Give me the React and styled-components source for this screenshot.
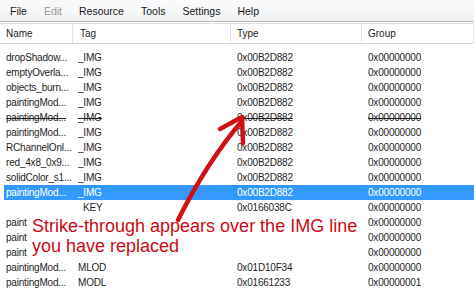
import React from "react";
import styled, { createGlobalStyle } from "styled-components";

const Global = createGlobalStyle`
  html, body { margin: 0; padding: 0; background: #ffffff; }
  body { font-family: "Liberation Sans", Arial, sans-serif; }
`;

const Window = styled.div`
  position: relative;
  width: 474px;
  height: 293px;
  overflow: hidden;
  background: #ffffff;
  font-family: "Liberation Sans", Arial, sans-serif;
  font-size: 10px;
  color: #1a1a1a;
`;

const MenuBar = styled.div`
  display: flex;
  align-items: center;
  gap: 17px;
  height: 22px;
  padding-left: 10px;
  background: linear-gradient(#fafbfc, #f1f2f4);
  border-bottom: 1px solid #b9bcc2;
  box-sizing: border-box;
  font-size: 10.5px;
`;

const MenuItem = styled.span`
  color: ${(p) => (p.$disabled ? "#9a9a9a" : "#1a1a1a")};
`;

const Header = styled.div`
  display: grid;
  grid-template-columns: 73px 158px 131px 1fr;
  height: 21px;
  margin-top: 1px;
  border-top: 1px solid #e3e3e3;
  border-bottom: 1px solid #d5d5d5;
  box-sizing: border-box;
  background: #ffffff;
`;

const HeadCell = styled.div`
  display: flex;
  align-items: center;
  padding-left: ${(p) => p.$pad}px;
  border-right: 1px solid #e5e5e5;
  color: #1e1e1e;
`;

const List = styled.div`
  padding-top: 6px;
  padding-left: 4px;
`;

const Row = styled.div`
  display: grid;
  grid-template-columns: 69px 158px 131px 1fr;
  height: 15px;
  align-items: center;
  white-space: nowrap;
  letter-spacing: -0.2px;
  background: ${(p) => (p.$selected ? "#3399ff" : "transparent")};
  color: ${(p) => (p.$selected ? "#ffffff" : "#1e1e1e")};
  text-decoration: ${(p) => (p.$struck ? "line-through" : "none")};
`;

const Cell = styled.div`
  padding-left: ${(p) => p.$pad}px;
  overflow: hidden;
  min-width: 0;
`;

const Note = styled.div`
  position: absolute;
  left: 30px;
  top: 214px;
  width: 330px;
  height: 46px;
  background: #ffffff;
  box-sizing: border-box;
  padding: 2px 0 0 2px;
  font-family: "Liberation Sans", Arial, sans-serif;
  font-size: 18px;
  line-height: 20px;
  color: #cc0a14;
  white-space: nowrap;
`;

const ArrowLayer = styled.svg`
  position: absolute;
  left: 0;
  top: 0;
  pointer-events: none;
`;

const rows = [
  { name: "dropShadow...", tag: "_IMG", type: "0x00B2D882", group: "0x00000000" },
  { name: "emptyOverla...", tag: "_IMG", type: "0x00B2D882", group: "0x00000000" },
  { name: "objects_burn...", tag: "_IMG", type: "0x00B2D882", group: "0x00000000" },
  { name: "paintingMod...", tag: "_IMG", type: "0x00B2D882", group: "0x00000000" },
  { name: "paintingMod...", tag: "_IMG", type: "0x00B2D882", group: "0x00000000", struck: true },
  { name: "paintingMod...", tag: "_IMG", type: "0x00B2D882", group: "0x00000000" },
  { name: "RChannelOnl...", tag: "_IMG", type: "0x00B2D882", group: "0x00000000" },
  { name: "red_4x8_0x9...", tag: "_IMG", type: "0x00B2D882", group: "0x00000000" },
  { name: "solidColor_s1...", tag: "_IMG", type: "0x00B2D882", group: "0x00000000" },
  { name: "paintingMod...", tag: "_IMG", type: "0x00B2D882", group: "0x00000000", selected: true },
  { name: "", tag: "KEY", type: "0x0166038C", group: "0x00000000", indent: 5 },
  { name: "paint", tag: "", type: "", group: "0x00000000" },
  { name: "paint", tag: "", type: "", group: "0x00000000" },
  { name: "paint", tag: "", type: "", group: "0x00000000" },
  { name: "paintingMod...", tag: "MLOD", type: "0x01D10F34", group: "0x00000000" },
  { name: "paintingMod...", tag: "MODL", type: "0x01661233", group: "0x00000001" },
];

const menu = [
  { label: "File" },
  { label: "Edit", disabled: true },
  { label: "Resource" },
  { label: "Tools" },
  { label: "Settings" },
  { label: "Help" },
];

export default function App() {
  return (
    <Window>
      <Global />
      <MenuBar>
        {menu.map((m) => (
          <MenuItem key={m.label} $disabled={m.disabled}>
            {m.label}
          </MenuItem>
        ))}
      </MenuBar>
      <Header>
        <HeadCell $pad={6}>Name</HeadCell>
        <HeadCell $pad={7}>Tag</HeadCell>
        <HeadCell $pad={6}>Type</HeadCell>
        <HeadCell $pad={6}>Group</HeadCell>
      </Header>
      <List>
        {rows.map((r, i) => (
          <Row key={i} $selected={r.selected} $struck={r.struck}>
            <Cell $pad={2}>{r.name}</Cell>
            <Cell $pad={5 + (r.indent || 0)}>{r.tag}</Cell>
            <Cell $pad={6}>{r.type}</Cell>
            <Cell $pad={6}>{r.group}</Cell>
          </Row>
        ))}
      </List>
      <Note>
        Strike-through appears over the IMG line
        <br />
        you have replaced
      </Note>
      <ArrowLayer width="474" height="293" viewBox="0 0 474 293">
        <path
          d="M178 220 C 192 192, 212 156, 242 121"
          fill="none"
          stroke="#cf1016"
          strokeWidth="4.5"
          strokeLinecap="round"
        />
        <path
          d="M220 129 L242 117 L243 143"
          fill="none"
          stroke="#cf1016"
          strokeWidth="4.5"
          strokeLinecap="round"
          strokeLinejoin="round"
        />
      </ArrowLayer>
    </Window>
  );
}
